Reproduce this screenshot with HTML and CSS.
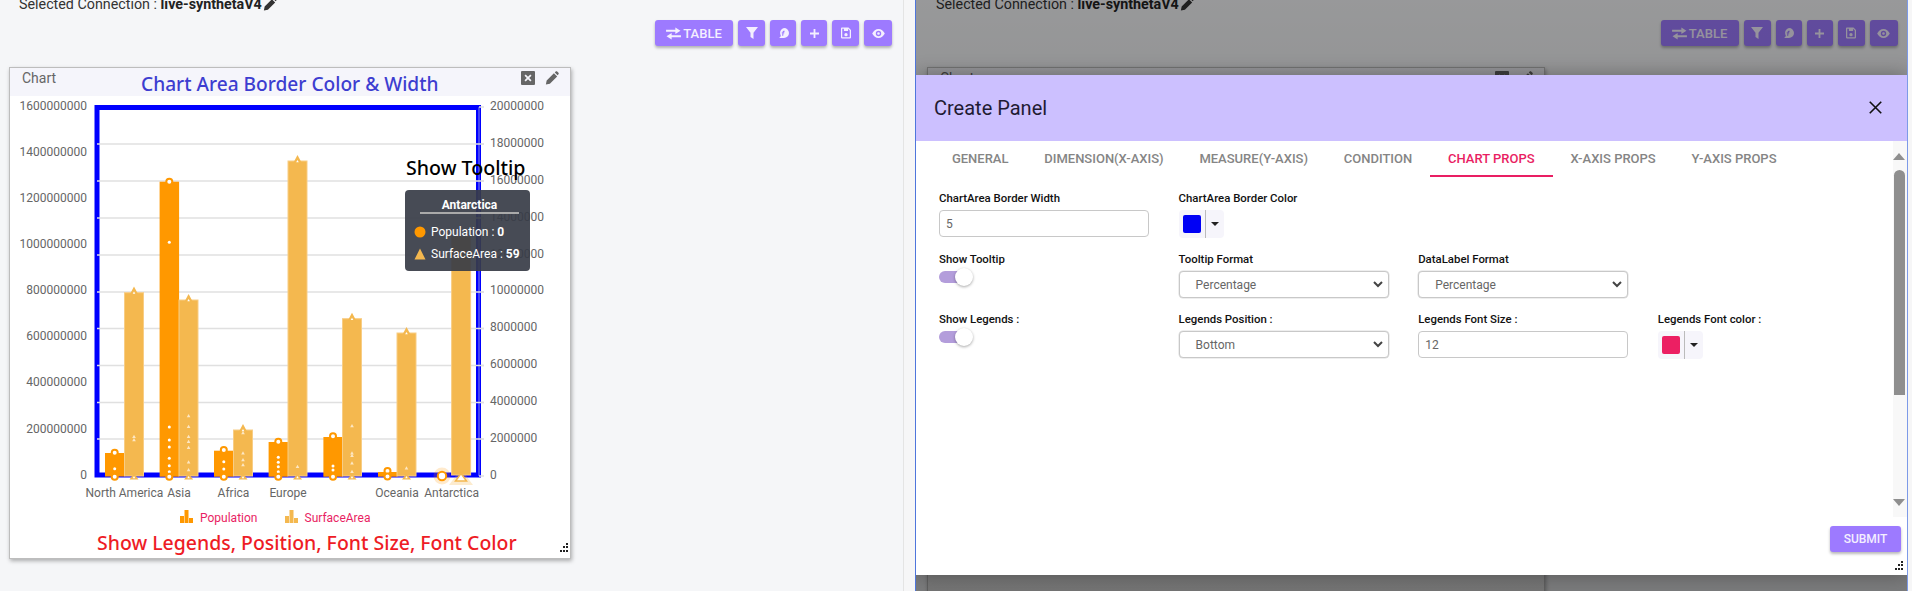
FILE: index.html
```html
<!DOCTYPE html>
<html lang="en">
<head>
<meta charset="utf-8">
<title>Create Panel</title>
<link rel="stylesheet" href="styles.css">
</head>
<body>
<svg class="defs" width="0" height="0" aria-hidden="true">
  <defs>
    <symbol id="i-pencil" viewBox="0 0 16 16"><path d="M1 15.5l.9-4.6 8.3-8.3 3.7 3.7-8.3 8.3zM11.2 1.6l1-1c.5-.5 1.2-.5 1.7 0l1.5 1.500c.5.5.5 1.200 0 1.700l-1 1z"/></symbol>
    <symbol id="i-close" viewBox="0 0 14 14"><path fill-rule="evenodd" d="M1 0h12a1 1 0 0 1 1 1v12a1 1 0 0 1-1 1H1a1 1 0 0 1-1-1V1a1 1 0 0 1 1-1zm2.500 4.700L5.800 7 3.500 9.300l1.200 1.200L7 8.200l2.300 2.300 1.200-1.200L8.200 7l2.300-2.300-1.200-1.200L7 5.800 4.700 3.500z"/></symbol>
    <symbol id="i-swap" viewBox="0 0 16 14"><path d="M0 3h10V.5L15.500 4 10 7.500V5H0zM16 9H6V6.500L.5 10 6 13.500V11h10z"/></symbol>
    <symbol id="i-filter" viewBox="0 0 12 12"><path d="M0 0h12L7.500 5.800V12l-3-2V5.800z"/></symbol>
    <symbol id="i-fn" viewBox="0 0 12 12"><path fill-rule="evenodd" d="M6.500 0a5.500 5.500 0 1 1 0 11H1c1.500-1 2-1.500 2-3A5.500 5.500 0 0 1 6.500 0zM6 3c-.8.300-1 1-1.100 1.800H4v1h.8L4.500 8.500h1.200l.3-2.700h1v-1H6.100C6.200 4.200 6.500 4 7.200 4V3z"/></symbol>
    <symbol id="i-plus" viewBox="0 0 10 10"><path d="M4 0h2v4h4v2H6v4H4V6H0V4h4z"/></symbol>
    <symbol id="i-save" viewBox="0 0 12 13"><path fill-rule="evenodd" d="M1 0h8l3 3v9a1 1 0 0 1-1 1H1a1 1 0 0 1-1-1V1a1 1 0 0 1 1-1zm.5 1.500v10h9V3.600L8.500 1.500V4h-5V1.500zM6 6.500a2 2 0 1 1 0 4 2 2 0 0 1 0-4z"/></symbol>
    <symbol id="i-eye" viewBox="0 0 14 10"><path fill-rule="evenodd" d="M7 0c3 0 5.500 2 7 5-1.500 3-4 5-7 5S1.500 8 0 5c1.500-3 4-5 7-5zm0 2a3 3 0 1 0 0 6 3 3 0 0 0 0-6zm0 1.500a1.500 1.500 0 1 1 0 3 1.500 1.500 0 0 1 0-3z"/></symbol>
    <symbol id="i-chev" viewBox="0 0 10 7"><path d="M1 1l4 4 4-4" fill="none" stroke="currentColor" stroke-width="2"/></symbol>
    <symbol id="i-grip" viewBox="0 0 10 10"><path d="M7 0h2v2H7zM7 3h2v2H7zM4 3h2v2H4zM7 7h2v2H7zM4 7h2v2H4zM1 7h2v2H1z"/></symbol>
    <circle id="d" r="1.500" fill="#fff"/>
    <circle id="r" r="3" fill="#fff" stroke="#ff9800" stroke-width="2"/>
    <path id="t" d="M0-2L1.800 1.200H-1.800z" fill="#fde7c4"/>
    <g id="tip"><path d="M0-6L4 1.500H-4z" fill="#f4b84f"/><path d="M0-1L1.300 1.200H-1.300z" fill="#fff"/></g>
    <g id="base"><path d="M0-3.500L4.500 2.500H-4.500z" fill="#f4b84f"/><path d="M0-1L1.300 1.200H-1.300z" fill="#fff"/></g>
  </defs>
</svg>

<div class="page">
  <section class="pane pane-left">
    <div class="conn">Selected Connection : <b>live-synthetaV4</b><svg class="conn-pencil"><use href="#i-pencil"/></svg></div>
    <div class="toolbar">
      <button class="btn btn-wide"><svg class="ic ic-swap"><use href="#i-swap"/></svg>TABLE</button>
      <button class="btn btn-a"><svg class="ic ic-filter"><use href="#i-filter"/></svg></button>
      <button class="btn btn-b"><svg class="ic ic-fn"><use href="#i-fn"/></svg></button>
      <button class="btn btn-b"><svg class="ic ic-plus"><use href="#i-plus"/></svg></button>
      <button class="btn btn-a"><svg class="ic ic-save"><use href="#i-save"/></svg></button>
      <button class="btn btn-c"><svg class="ic ic-eye"><use href="#i-eye"/></svg></button>
    </div>

    <div class="card">
      <header class="card-head">
        <span class="card-title">Chart</span>
        <span class="card-tools"><svg class="tool tool-close"><use href="#i-close"/></svg><svg class="tool tool-pencil"><use href="#i-pencil"/></svg></span>
      </header>
      <svg class="chart" viewBox="10 96 559 462" width="559" height="462">
        <g class="grid">
          <line x1="97" x2="484" y1="144" y2="144"/><line x1="97" x2="484" y1="181" y2="181"/><line x1="97" x2="484" y1="218" y2="218"/><line x1="97" x2="484" y1="255" y2="255"/><line x1="97" x2="484" y1="292" y2="292"/><line x1="97" x2="484" y1="328.500" y2="328.500"/><line x1="97" x2="484" y1="365.500" y2="365.500"/><line x1="97" x2="484" y1="402.500" y2="402.500"/><line x1="97" x2="484" y1="439" y2="439"/>
        </g>
        <rect class="plot" x="97" y="107.500" width="381.500" height="367.500"/>
        <g class="grid">
          <line x1="97" x2="478" y1="144" y2="144"/><line x1="97" x2="478" y1="181" y2="181"/><line x1="97" x2="478" y1="218" y2="218"/><line x1="97" x2="478" y1="255" y2="255"/><line x1="97" x2="478" y1="292" y2="292"/><line x1="97" x2="478" y1="328.500" y2="328.500"/><line x1="97" x2="478" y1="365.500" y2="365.500"/><line x1="97" x2="478" y1="402.500" y2="402.500"/><line x1="97" x2="478" y1="439" y2="439"/>
        </g>
        <line class="axis-r" x1="479" x2="479" y1="107" y2="476"/>
        <g class="grid">
          <line x1="479" x2="484" y1="107" y2="107"/><line x1="479" x2="484" y1="476" y2="476"/>
          <line x1="478" x2="484" y1="144" y2="144"/><line x1="478" x2="484" y1="181" y2="181"/><line x1="478" x2="484" y1="218" y2="218"/><line x1="478" x2="484" y1="255" y2="255"/><line x1="478" x2="484" y1="292" y2="292"/><line x1="478" x2="484" y1="328.500" y2="328.500"/><line x1="478" x2="484" y1="365.500" y2="365.500"/><line x1="478" x2="484" y1="402.500" y2="402.500"/><line x1="478" x2="484" y1="439" y2="439"/>
        </g>

        <g class="ylab ylab-l">
          <text x="87" y="110">1600000000</text><text x="87" y="156">1400000000</text><text x="87" y="202">1200000000</text><text x="87" y="248">1000000000</text><text x="87" y="294">800000000</text><text x="87" y="340">600000000</text><text x="87" y="386">400000000</text><text x="87" y="432.500">200000000</text><text x="87" y="479">0</text>
        </g>
        <g class="ylab">
          <text x="490" y="110">20000000</text><text x="490" y="147">18000000</text><text x="490" y="184">16000000</text><text x="490" y="221">14000000</text><text x="490" y="257.500">12000000</text><text x="490" y="294">10000000</text><text x="490" y="331">8000000</text><text x="490" y="368">6000000</text><text x="490" y="405">4000000</text><text x="490" y="442">2000000</text><text x="490" y="479">0</text>
        </g>

        <g class="bars-pop">
          <rect x="105" y="453" width="19.500" height="23.500"/><rect x="159.600" y="181.700" width="19.500" height="295"/><rect x="214" y="450.700" width="19.500" height="26"/><rect x="268.600" y="442" width="19.500" height="34.700"/><rect x="323.400" y="437" width="19.500" height="39.700"/><rect x="378" y="472" width="19.500" height="4.700"/>
        </g>
        <g class="bars-sa">
          <rect x="124.500" y="292.700" width="19" height="183.300"/><rect x="179" y="300" width="19" height="176"/><rect x="233.500" y="430" width="19" height="46"/><rect x="288" y="161" width="19" height="315"/><rect x="342.500" y="318.700" width="19" height="157.300"/><rect x="397" y="333" width="19" height="143"/><rect x="451.600" y="236.700" width="19" height="238.300"/>
        </g>

        <g class="marks">
          <use href="#d" x="114.700" y="468.700"/><use href="#r" x="114.700" y="452.700"/><use href="#r" x="114.700" y="476.700"/>
          <use href="#r" x="169.300" y="181.700"/><use href="#d" x="169.300" y="242.300"/><use href="#d" x="169.300" y="427"/><use href="#d" x="169.300" y="440"/><use href="#d" x="169.300" y="447"/><use href="#d" x="169.300" y="458.300"/><use href="#d" x="169.300" y="465.700"/><use href="#d" x="169.300" y="471.700"/><use href="#r" x="169.300" y="476.700"/>
          <use href="#r" x="223.800" y="450"/><use href="#d" x="223.800" y="461.700"/><use href="#d" x="223.800" y="469"/><use href="#r" x="223.800" y="476.700"/>
          <use href="#r" x="278.300" y="441.700"/><use href="#d" x="278.300" y="457.300"/><use href="#d" x="278.300" y="462.300"/><use href="#d" x="278.300" y="466.700"/><use href="#d" x="278.300" y="471.700"/><use href="#r" x="278.300" y="476.700"/>
          <use href="#r" x="333" y="436.300"/><use href="#d" x="333" y="466"/><use href="#d" x="333" y="470"/><use href="#r" x="333" y="476.700"/>
          <use href="#r" x="387.500" y="471"/><use href="#r" x="387.500" y="476.500"/>

          <use href="#tip" x="134" y="292.500"/><use href="#t" x="134" y="436.700"/><use href="#t" x="134" y="440"/><use href="#base" x="134" y="477"/>
          <use href="#tip" x="188.600" y="300"/><use href="#t" x="188.600" y="416"/><use href="#t" x="188.600" y="426.700"/><use href="#t" x="188.600" y="436.700"/><use href="#t" x="188.600" y="441.700"/><use href="#t" x="188.600" y="447.700"/><use href="#t" x="188.600" y="462.300"/><use href="#t" x="188.600" y="470"/><use href="#base" x="188.600" y="477"/>
          <use href="#tip" x="243" y="430"/><use href="#t" x="243" y="433"/><use href="#t" x="243" y="453.300"/><use href="#t" x="243" y="460"/><use href="#t" x="243" y="465"/><use href="#base" x="243" y="477"/>
          <use href="#tip" x="297.500" y="161"/><use href="#t" x="297.500" y="466.700"/><use href="#base" x="297.500" y="477"/>
          <use href="#tip" x="352" y="318.700"/><use href="#t" x="352" y="426"/><use href="#t" x="352" y="453.300"/><use href="#t" x="352" y="455.700"/><use href="#t" x="352" y="463.300"/><use href="#t" x="352" y="471.700"/><use href="#base" x="352" y="477"/>
          <use href="#tip" x="406.500" y="333"/><use href="#t" x="406.500" y="468.300"/><use href="#base" x="406.500" y="477"/>

          <circle cx="442" cy="476" r="8.500" fill="#ff9800" fill-opacity=".2"/>
          <circle cx="442" cy="476" r="4.200" fill="#fff" stroke="#ff9800" stroke-width="2"/>
          <path d="M461 469L473 485H449z" fill="#f4b84f" fill-opacity=".28"/>
          <path d="M461 473.500L466.500 481H455.500z" fill="#fff" stroke="#f4b84f" stroke-width="1.500"/>
        </g>

        <g class="xlab">
          <text x="124.400" y="497">North America</text><text x="179" y="497">Asia</text><text x="233.500" y="497">Africa</text><text x="288" y="497">Europe</text><text x="397" y="497">Oceania</text><text x="451.600" y="497">Antarctica</text>
        </g>

        <path fill="#ff9800" d="M180 516h4v7h-4zM184.500 510h4v13h-4zM189 518h4v5h-4z"/>
        <text class="leg" x="200" y="522">Population</text>
        <path fill="#f4b84f" d="M285 516h4v7h-4zM289.500 510h4v13h-4zM294 518h4v5h-4z"/>
        <text class="leg" x="304.500" y="522">SurfaceArea</text>
      </svg>

      <span class="note note-title">Chart Area Border Color &amp; Width</span>
      <span class="note note-tip">Show Tooltip</span>
      <span class="note note-leg">Show Legends, Position, Font Size, Font Color</span>

      <div class="tooltip">
        <div class="tt-title">Antarctica</div>
        <div class="tt-row"><svg class="tt-mark" viewBox="0 0 12 12"><circle cx="6" cy="6" r="5.500" fill="#ff9800"/></svg><span>Population : <b>0</b></span></div>
        <div class="tt-row"><svg class="tt-mark" viewBox="0 0 12 12"><path d="M6 .5L11.500 11.500H.5z" fill="#f4b84f"/></svg><span>SurfaceArea : <b>59</b></span></div>
      </div>
      <svg class="grip grip-card"><use href="#i-grip"/></svg>
    </div>
  </section>

  <section class="pane pane-right">
    <div class="conn">Selected Connection : <b>live-synthetaV4</b><svg class="conn-pencil"><use href="#i-pencil"/></svg></div>
    <div class="toolbar">
      <button class="btn btn-wide"><svg class="ic ic-swap"><use href="#i-swap"/></svg>TABLE</button>
      <button class="btn btn-a"><svg class="ic ic-filter"><use href="#i-filter"/></svg></button>
      <button class="btn btn-b"><svg class="ic ic-fn"><use href="#i-fn"/></svg></button>
      <button class="btn btn-b"><svg class="ic ic-plus"><use href="#i-plus"/></svg></button>
      <button class="btn btn-a"><svg class="ic ic-save"><use href="#i-save"/></svg></button>
      <button class="btn btn-c"><svg class="ic ic-eye"><use href="#i-eye"/></svg></button>
    </div>
    <div class="card card-dim">
      <header class="card-head">
        <span class="card-title">Chart</span>
        <span class="card-tools"><svg class="tool tool-close"><use href="#i-close"/></svg><svg class="tool tool-pencil"><use href="#i-pencil"/></svg></span>
      </header>
    </div>

    <div class="scrim"></div>

    <div class="dialog">
      <header class="dialog-head">
        <h2 class="dialog-title">Create Panel</h2>
        <svg class="dialog-x" viewBox="0 0 12 12"><path d="M.7.7l10.600 10.600M11.300.7L.7 11.300" fill="none" stroke="#111" stroke-width="1.500"/></svg>
      </header>
      <div class="dialog-body">
        <div class="dialog-main">
          <nav class="tabs">
            <span class="tab">General</span>
            <span class="tab">Dimension(X-Axis)</span>
            <span class="tab">Measure(Y-Axis)</span>
            <span class="tab">Condition</span>
            <span class="tab tab-on">Chart Props</span>
            <span class="tab">X-Axis Props</span>
            <span class="tab">Y-Axis Props</span>
          </nav>
          <div class="form">
            <div class="field"><label>ChartArea Border Width</label><div class="control">5</div></div>
            <div class="field"><label>ChartArea Border Color</label><div class="picker"><span class="swatch swatch-blue"></span><span class="caret"></span></div></div>
            <div class="field"></div><div class="field"></div>

            <div class="field"><label>Show Tooltip</label><div class="toggle"><span class="knob"></span></div></div>
            <div class="field"><label>Tooltip Format</label><div class="control control-select">Percentage<svg class="chev"><use href="#i-chev"/></svg></div></div>
            <div class="field"><label>DataLabel Format</label><div class="control control-select">Percentage<svg class="chev"><use href="#i-chev"/></svg></div></div>
            <div class="field"></div>

            <div class="field"><label>Show Legends :</label><div class="toggle"><span class="knob"></span></div></div>
            <div class="field"><label>Legends Position :</label><div class="control control-select">Bottom<svg class="chev"><use href="#i-chev"/></svg></div></div>
            <div class="field"><label>Legends Font Size :</label><div class="control">12</div></div>
            <div class="field"><label>Legends Font color :</label><div class="picker"><span class="swatch swatch-pink"></span><span class="caret"></span></div></div>
          </div>
        </div>
        <div class="scrollbar">
          <span class="sb-up"></span>
          <span class="sb-thumb"></span>
          <span class="sb-down"></span>
        </div>
      </div>
      <footer class="dialog-foot"><button class="submit">SUBMIT</button></footer>
      <svg class="grip grip-dialog"><use href="#i-grip"/></svg>
    </div>
  </section>
</div>
</body>
</html>
```
FILE: styles.css
```css
* { box-sizing: border-box; }
html, body { margin: 0; height: 591px; overflow: hidden; background: #f6f6f7; }
body { font-family: Roboto, "Liberation Sans", sans-serif; color: #333; }
.defs { position: absolute; }
button { font-family: inherit; border: 0; padding: 0; }

.page { display: grid; grid-template-columns: 904px 993px; column-gap: 11px; height: 591px; }

.pane { position: relative; height: 591px; overflow: hidden; background: #f5f6f8; padding-right: 11px; }
.pane-left { border-right: 1px solid #e4e4e4; padding-left: 9px; }
.pane-right { border-left: 1.500px solid #4f76dc; border-right: 1.500px solid #7d9ae8; padding-left: 11px; padding-right: 9.500px; }

.conn { display: flex; align-items: center; height: 20px; margin: -6px 0 0 10px; font-size: 14.300px; color: #333; white-space: pre; }
.pane-right .conn { margin-left: 9px; }
.conn b { font-weight: 700; color: #222; }
.conn-pencil { width: 14px; height: 14px; fill: #333; margin-left: 1px; }

.toolbar { display: flex; justify-content: flex-end; gap: 5px; margin-top: 6px; height: 26px; }
.btn { display: flex; align-items: center; justify-content: center; height: 26px; border-radius: 3px; background: #9d7aff; color: #f4efff; font-size: 13px; font-weight: 500; box-shadow: 0 2px 3px rgba(0,0,0,.28); }
.btn-wide { width: 78px; gap: 2px; }
.btn-a { width: 27px; }
.btn-b { width: 26px; }
.btn-c { width: 28px; }
.ic { fill: #f4efff; display: block; }
.ic-swap { width: 15px; height: 13px; }
.ic-filter { width: 12px; height: 12px; }
.ic-fn { width: 11px; height: 11px; }
.ic-plus { width: 9px; height: 9px; }
.ic-save { width: 10px; height: 12px; }
.ic-eye { width: 13px; height: 9px; }

.card { position: relative; width: 562px; height: 492px; margin-top: 21px; background: #fff; border: 1px solid #bdbdbd; box-shadow: 1px 2px 4px rgba(0,0,0,.3); }
.card-dim { width: 618px; height: 560px; background: #e9e9e9; }
.card-head { display: flex; align-items: flex-start; justify-content: space-between; height: 28px; padding: 2px 11px 0 12px; background: #f5f5fb; }
.card-title { font-size: 14px; font-weight: 400; line-height: 16px; color: #666; }
.card-tools { display: flex; gap: 10px; margin-top: 1px; }
.tool { width: 14px; height: 14px; fill: #666; display: block; }
.chart { display: block; }

.plot { fill: #fff; stroke: #0000ff; stroke-width: 5; }
.axis-r { stroke: #8a8ae6; stroke-width: 1; }
.grid line { stroke: #e0e0e0; stroke-width: 1.500; }
.ylab text { font-family: Roboto, sans-serif; font-size: 12px; fill: #666; }
.ylab-l text { text-anchor: end; }
.xlab text { font-family: Roboto, sans-serif; font-size: 12px; fill: #666; text-anchor: middle; }
.leg { font-family: Roboto, sans-serif; font-size: 12px; fill: #e91e63; }
.bars-pop rect { fill: #ff9800; }
.bars-sa rect { fill: #f4b84f; stroke: #f8cd85; stroke-width: 1; }

.note { position: absolute; font-family: "Noto Sans", sans-serif; white-space: nowrap; line-height: 28px; font-weight: 500; }
.note-title { left: 131px; top: 2px; font-size: 19.140px; color: #3d3dd0; }
.note-tip { left: 396px; top: 86px; font-size: 19.600px; color: #000; }
.note-leg { left: 87px; top: 461px; font-size: 19.470px; color: #ee1c25; }

.tooltip { position: absolute; left: 395px; top: 122px; width: 125px; height: 81px; padding: 8px 10px 0 10px; border-radius: 4px; background: rgba(55,60,70,.92); color: #fff; font-size: 12px; }
.tt-title { margin: 0 1px 0 5px; height: 16px; line-height: 14px; font-weight: 700; text-align: center; border-bottom: 2px solid #aaa; }
.tt-row { display: flex; align-items: center; gap: 5px; height: 22px; white-space: pre; }
.tt-row b { font-weight: 700; }
.tt-row:nth-child(2) { margin-top: 7px; }
.tt-mark { width: 12px; height: 12px; margin-left: -1px; flex: none; }

.grip { position: absolute; width: 10px; height: 10px; fill: #222; }
.grip-card { right: 1px; bottom: 5px; }
.grip-dialog { right: 3px; bottom: 4px; }

.scrim { position: absolute; inset: 0; background: linear-gradient(rgba(0,0,0,.38), rgba(0,0,0,.5)); }

.dialog { position: absolute; left: 0; right: 0; top: 75px; height: 500px; display: flex; flex-direction: column; background: #fff; box-shadow: 0 0 18px rgba(0,0,0,.3); }
.dialog-head { flex: none; display: flex; align-items: center; justify-content: space-between; height: 66px; padding: 0 25px 0 18px; background: #ccc0ff; }
.dialog-title { margin: 0; font-size: 20px; font-weight: 400; color: #1f1b33; }
.dialog-x { width: 13px; height: 13px; margin-bottom: 1px; }

.dialog-body { flex: none; display: flex; height: 376px; }
.dialog-main { flex: 1; min-width: 0; }

.tabs { display: flex; height: 36px; padding-left: 18px; }
.tab { display: flex; align-items: center; padding: 0 17.900px 1px; font-size: 13px; font-weight: 500; color: #858585; text-transform: uppercase; white-space: nowrap; }
.tab-on { color: #e91e63; border-bottom: 2px solid #e91e63; padding-bottom: 0; }

.form { display: grid; grid-template-columns: repeat(4, 239.600px); align-content: start; row-gap: 14px; padding: 14px 0 0 23px; }
.field { display: flex; flex-direction: column; align-items: flex-start; }
.field label { height: 14px; margin-bottom: 5px; font-size: 11.400px; line-height: 14px; font-weight: 500; color: #111; white-space: nowrap; }

.control { position: relative; display: flex; align-items: center; width: 210px; height: 27px; padding: 0 6px; background: #fff; border: 1px solid #c8c8c8; border-radius: 4px; font-size: 12px; color: #666; }
.control-select { padding-left: 16px; box-shadow: 0 0 0 .5px #ddd; }
.chev { position: absolute; right: 5px; top: 9px; width: 10px; height: 7px; color: #444; }

.picker { display: flex; align-items: center; width: 45px; height: 28px; padding-left: 4px; background: #f6f5fb; border-radius: 4px; }
.swatch { width: 18px; height: 18px; border-radius: 2px; }
.swatch-blue { background: #0000f5; }
.swatch-pink { background: #ec1f63; }
.caret { width: 0; height: 28px; margin-left: 4px; border-left: 1px solid #bbb; position: relative; }
.caret::after { content: ""; position: absolute; left: 5px; top: 12px; border: 4px solid transparent; border-top: 4px solid #222; border-bottom: 0; }

.toggle { position: relative; width: 27px; height: 12px; margin-top: 0; background: #b39ddb; border-radius: 6px; }
.knob { position: absolute; left: 16px; top: -3px; width: 18px; height: 18px; background: #fff; border-radius: 50%; box-shadow: 0 1px 3px rgba(0,0,0,.35); }

.scrollbar { flex: none; position: relative; width: 14px; background: #f8f8f8; margin-top: 0; }
.sb-up, .sb-down { position: absolute; left: 0; width: 0; height: 0; border-left: 6.500px solid transparent; border-right: 6.500px solid transparent; }
.sb-up { top: 12px; border-bottom: 7px solid #8f8f8f; }
.sb-down { top: 358px; border-top: 7px solid #8f8f8f; }
.sb-thumb { position: absolute; left: 1px; top: 29px; width: 11px; height: 225px; background: #8f8f8f; border-radius: 6px 6px 0 0; }

.dialog-foot { flex: none; display: flex; justify-content: flex-end; height: 58px; padding: 9px 6px 0 0; }
.submit { width: 71px; height: 26px; border-radius: 3px; background: #9d7aff; color: #f4efff; font-size: 12px; font-weight: 500; box-shadow: 0 2px 3px rgba(0,0,0,.28); }
```
